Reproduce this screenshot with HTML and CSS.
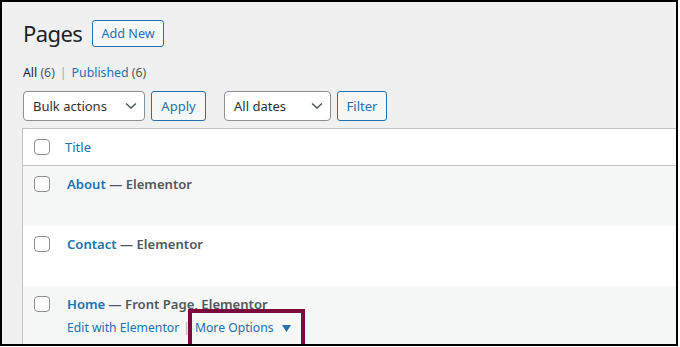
FILE: index.html
```html
<!DOCTYPE html>
<html>
<head>
<meta charset="utf-8">
<link rel="stylesheet" href="styles.css">
</head>
<body>
<div class="frame">
  <div class="wrap">
    <div class="head">
      <h1 class="title">Pages</h1>
      <span class="btn btn-add">Add New</span>
    </div>
    <div class="subsub">
      <span class="current">All <span class="count">(6)</span></span>
      <span class="sep">|</span>
      <span class="link">Published <span class="count">(6)</span></span>
    </div>
    <div class="tablenav">
      <div class="select select-bulk"><span>Bulk actions</span>
        <svg class="chev" width="12" height="8" viewBox="0 0 12 8"><path d="M1 1.5 L6 6 L11 1.5" fill="none" stroke="#50575e" stroke-width="1.5"/></svg>
      </div>
      <span class="btn btn-apply">Apply</span>
      <div class="select select-dates"><span>All dates</span>
        <svg class="chev" width="12" height="8" viewBox="0 0 12 8"><path d="M1 1.5 L6 6 L11 1.5" fill="none" stroke="#50575e" stroke-width="1.5"/></svg>
      </div>
      <span class="btn btn-filter">Filter</span>
    </div>
    <div class="table">
      <div class="thead">
        <span class="cb"></span>
        <span class="th-title">Title</span>
      </div>
      <div class="row alt">
        <span class="cb"></span>
        <div class="cell">
          <div class="row-title"><span class="link">About</span> — Elementor</div>
        </div>
      </div>
      <div class="row">
        <span class="cb"></span>
        <div class="cell">
          <div class="row-title"><span class="link">Contact</span> — Elementor</div>
        </div>
      </div>
      <div class="row alt">
        <span class="cb"></span>
        <div class="cell">
          <div class="row-title"><span class="link">Home</span> — Front Page, Elementor</div>
          <div class="row-actions">
            <span class="act">Edit with Elementor</span>
            <span class="bar">|</span>
            <span class="act more">More Options <svg class="tri" width="9" height="7" viewBox="0 0 9 7"><path d="M0 0 H9 L4.5 7 Z" fill="#2271b1"/></svg></span>
          </div>
        </div>
      </div>
    </div>
  </div>
  <div class="frame-border"></div>
</div>
</body>
</html>
```

FILE: styles.css
```css
* { box-sizing: border-box; }
html, body { margin: 0; padding: 0; background: #fff; }
body { font-family: "Noto Sans", "Open Sans", sans-serif; color: #3c434a; font-size: 13px; }

.frame {
  position: relative;
  width: 680px;
  height: 347px;
  overflow: hidden;
  background: #fff;
}
.wrap {
  width: 678px;
  height: 345px;
  background: #f0f0f1;
  padding-left: 22px;
  overflow: hidden;
}
.frame-border {
  position: absolute;
  left: 0; top: 0;
  width: 678px; height: 346px;
  border: 2px solid #000;
  pointer-events: none;
}

.head {
  display: flex;
  align-items: center;
  padding-top: 18px;
  padding-left: 1px;
  height: 48px;
}
.title {
  margin: 0;
  font-size: 22px;
  font-weight: 400;
  line-height: 30px;
  color: #1d2327;
  margin-right: 10px;
  letter-spacing: -0.6px;
}
.btn {
  display: inline-flex;
  align-items: center;
  justify-content: center;
  border: 1px solid #2271b1;
  color: #2271b1;
  background: #f6f7f7;
  border-radius: 3px;
  font-size: 12.6px;
}
.btn-add { width: 72px; height: 27px; }

.subsub {
  margin-top: 15px;
  padding-left: 1px;
  height: 20px;
  line-height: 20px;
  font-size: 12.3px;
  color: #50575e;
  display: flex;
  gap: 5px;
}
.subsub .current { color: #1d2327; }
.subsub .count { color: #50575e; }
.subsub .link { color: #2271b1; }
.subsub .link .count { color: #50575e; }
.subsub .sep { color: #a7aaad; }

.tablenav {
  margin-top: 8px;
  padding-left: 1px;
  display: flex;
  align-items: center;
  height: 30px;
}
.select {
  height: 30px;
  border: 1px solid #8c8f94;
  border-radius: 4px;
  background: #fff;
  display: flex;
  align-items: center;
  justify-content: space-between;
  padding: 0 7px 0 9px;
  font-size: 13px;
  color: #2c3338;
}
.select-bulk { width: 122px; }
.select-dates { width: 107px; margin-left: 18px; }
.btn-apply { width: 55px; height: 30px; margin-left: 6px; font-size: 13px; }
.btn-filter { width: 50px; height: 30px; margin-left: 6px; font-size: 13px; }

.table {
  margin-top: 7px;
  width: 700px;
  border-top: 1px solid #c3c4c7;
  border-left: 1px solid #c3c4c7;
  background: #fff;
}
.thead {
  height: 37px;
  background: #fff;
  border-bottom: 1px solid #c3c4c7;
  display: flex;
  align-items: center;
  padding-left: 11px;
}
.cb {
  display: block;
  width: 16px;
  height: 16px;
  border: 1px solid #8c8f94;
  border-radius: 4px;
  background: #fff;
  flex: none;
}
.th-title {
  margin-left: 15px;
  color: #2271b1;
  font-size: 13px;
}
.row {
  height: 60px;
  display: flex;
  align-items: flex-start;
  padding-left: 11px;
  background: #fff;
}
.row.alt { background: #f6f7f7; }
.row .cb { margin-top: 10px; }
.cell { margin-left: 17px; padding-top: 8px; }
.row-title {
  font-size: 13.1px;
  font-weight: 600;
  color: #50575e;
  line-height: 20px;
}
.row-title .link { color: #2271b1; }
.row-actions {
  margin-top: 4px;
  font-size: 12.2px;
  line-height: 20px;
  color: #2271b1;
  display: flex;
  align-items: center;
}
.row-actions .bar { color: #a7aaad; margin: 0 5px 0 4px; }
.row-actions .more {
  position: relative;
  display: inline-flex;
  align-items: center;
}
.row-actions .more::after {
  content: "";
  position: absolute;
  left: -7px; top: -9px;
  width: 109px; height: 32px;
  border: 4px solid #7c0a3c;
}
.tri { margin-left: 8px; margin-top: 1px; }
```
